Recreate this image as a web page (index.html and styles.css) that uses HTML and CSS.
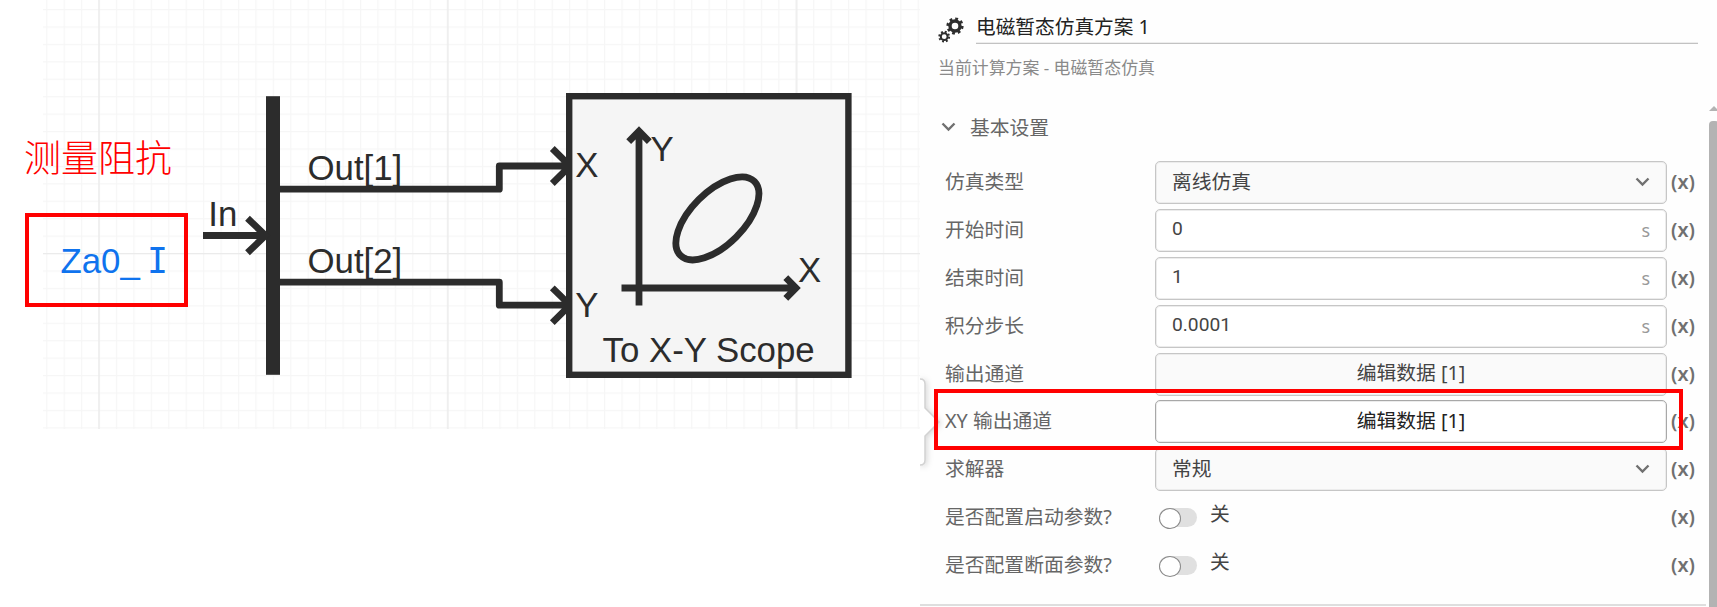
FILE: index.html
```
<!DOCTYPE html>
<html lang="zh">
<head>
<meta charset="utf-8">
<title>电磁暂态仿真方案 1</title>
<link rel="stylesheet" href="styles.css">
</head>
<body>
<main class="app">
  <svg class="canvas" viewBox="0 0 920 607" width="920" height="607">
    <defs>
      <pattern id="minor" x="98.5" y="253" width="17.43" height="17.43" patternUnits="userSpaceOnUse"><path d="M0 .5H17.43M.5 0V17.43" class="grid-minor"/></pattern>
      <pattern id="major" x="98" y="253" width="348.8" height="348.8" patternUnits="userSpaceOnUse"><path d="M0 .5H348.8M1 0V348.8" class="grid-major"/></pattern>
    </defs>
    <rect x="43" y="0" width="877" height="429" fill="url(#minor)"/>
    <rect x="43" y="0" width="877" height="429" fill="url(#major)"/>
    <rect x="266" y="96.2" width="14" height="278.6" class="ink"/>
    <g class="wire">
      <path d="M203 235.5H266M247.5 218.2L265.5 235.5L247.5 252.8"/>
      <path d="M280 189.2H499.3V166H568M552.3 148.5L570 166L552.3 183.5" stroke-linejoin="round"/>
      <path d="M280 282.2H499.3V305.2H568M552.3 287.8L570 305.2L552.3 322.6" stroke-linejoin="round"/>
      <rect x="569.2" y="96.2" width="279.2" height="278.6" class="block"/>
      <path d="M639 305.5V131M628.7 141.6L639 131.2L649.3 141.6"/>
      <path d="M621.5 288H796M785.8 277.7L796 288L785.8 298.3"/>
      <ellipse cx="717.4" cy="218.4" rx="52.3" ry="26.5" transform="rotate(-45 717.4 218.4)"/>
    </g>
    <g class="port">
      <text x="208.3" y="226.2">In</text>
      <text x="307.5" y="179.5">Out[1]</text>
      <text x="307.5" y="272.5">Out[2]</text>
      <text x="575.3" y="177.4">X</text>
      <text x="575.3" y="316.7">Y</text>
      <text x="650.5" y="160.6">Y</text>
      <text x="798" y="282.4">X</text>
      <text x="602.5" y="362">To X-Y Scope</text>
    </g>
    <text x="24" y="171.8" class="note">测量阻抗</text>
    <text x="60.5" y="273.3" class="pin">Za0_<tspan x="147" class="pin-mono">I</tspan></text>
    <rect x="27" y="215" width="159" height="90" class="mark"/>
  </svg>

  <section class="panel">
    <svg class="handle" width="24" height="100" viewBox="0 0 24 100">
      <path d="M0 7Q5 7 5 12V36L19 50L5 64V88Q5 93 0 93"/>
    </svg>
    <header class="head">
      <svg class="gears" width="26" height="26" viewBox="0 0 26 26">
        <circle cx="17" cy="9" r="5" class="ring"/>
        <circle cx="17" cy="9" r="7.3" class="teeth"/>
        <circle cx="6.2" cy="19.7" r="3.4" class="ring-s"/>
        <circle cx="6.2" cy="19.7" r="4.9" class="teeth-s"/>
      </svg>
      <h1 class="title">电磁暂态仿真方案 1</h1>
    </header>
    <p class="subtitle">当前计算方案 - 电磁暂态仿真</p>
    <h2 class="group"><svg class="chev" width="15" height="10" viewBox="0 0 15 10"><path d="M1.5 1.5L7.5 7.5L13.5 1.5"/></svg>基本设置</h2>

    <div class="rows">
      <div class="row"><label>仿真类型</label><div class="field select">离线仿真<svg class="chev" width="15" height="10" viewBox="0 0 15 10"><path d="M1.5 1.5L7.5 7.5L13.5 1.5"/></svg></div><b class="fx">(x)</b></div>
      <div class="row"><label>开始时间</label><div class="field"><span class="num">0</span><span class="unit">s</span></div><b class="fx">(x)</b></div>
      <div class="row"><label>结束时间</label><div class="field"><span class="num">1</span><span class="unit">s</span></div><b class="fx">(x)</b></div>
      <div class="row"><label>积分步长</label><div class="field"><span class="num">0.0001</span><span class="unit">s</span></div><b class="fx">(x)</b></div>
      <div class="row"><label>输出通道</label><div class="field button">编辑数据 [1]</div><b class="fx">(x)</b></div>
      <div class="row"><label>XY 输出通道</label><div class="field button active">编辑数据 [1]</div><b class="fx">(x)</b></div>
      <div class="row"><label>求解器</label><div class="field select">常规<svg class="chev" width="15" height="10" viewBox="0 0 15 10"><path d="M1.5 1.5L7.5 7.5L13.5 1.5"/></svg></div><b class="fx">(x)</b></div>
      <div class="row"><label>是否配置启动参数?</label><div class="switch"><i class="track"></i><span class="off">关</span></div><b class="fx">(x)</b></div>
      <div class="row"><label>是否配置断面参数?</label><div class="switch"><i class="track"></i><span class="off">关</span></div><b class="fx">(x)</b></div>
    </div>
    <div class="rule"></div>
    <div class="highlight"></div>
    <svg class="scroll-up" width="8" height="5" viewBox="0 0 8 5"><path d="M0 5L5 0L8 3V5Z"/></svg>
    <div class="scroll"></div>
  </section>
</main>
</body>
</html>
```
FILE: styles.css
```
* { box-sizing: border-box; }
body {
  margin: 0;
  background: #fff;
  font-family: "Noto Sans", "Noto Sans CJK SC", sans-serif;
  font-size: 19.8px;
  color: #444;
}
.app { display: flex; width: 1717px; height: 607px; overflow: hidden; }
.canvas { flex: none; display: block; }
.grid-minor { stroke: #f6f6f6; stroke-width: 1.5; fill: none; }
.grid-major { stroke: #ebebeb; stroke-width: 1.4; fill: none; }
.ink { fill: #2c2c2c; }
.wire { fill: none; stroke: #2c2c2c; stroke-width: 6.8; }
.block { fill: #f5f5f5; stroke-width: 6.4; }
.port { font: 34.8px "Liberation Sans", Arial, sans-serif; fill: #2c2c2c; }
.note { font: 300 37px "Noto Sans CJK SC", sans-serif; fill: #f00; }
.pin { font: 34.8px "Liberation Sans", Arial, sans-serif; fill: #0f73ee; }
.pin-mono { font-family: "DejaVu Sans Mono", monospace; }
.mark { fill: none; stroke: #f00; stroke-width: 4; }

.panel { position: relative; flex: none; width: 797px; height: 607px; background: #fefefe; }
.handle { position: absolute; left: 0; top: 372px; }
.handle path { fill: #fff; stroke: #d2d2d2; stroke-width: 1.5; filter: drop-shadow(1px 1px 3px rgba(0, 0, 0, .18)); }
.head { display: flex; height: 44px; padding: 0 19px 0 18px; }
.gears { flex: none; margin: 17px 12px 0 0; }
.gears circle { fill: none; stroke: #2e2e2e; }
.gears .ring { stroke-width: 3.4; }
.gears .teeth { stroke-width: 2.6; stroke-dasharray: 2.8 2.93; }
.gears .ring-s { stroke-width: 2; }
.gears .teeth-s { stroke-width: 2; stroke-dasharray: 1.9 1.95; }
.title { flex: 1; margin: 0; padding-top: 9px; border-bottom: 1px solid #c2c2c2; box-shadow: 0 -1px #ededed inset; font-size: 19.7px; font-weight: 400; line-height: 36px; color: #222; }
.subtitle { margin: 13px 0 0 18px; height: 22px; line-height: 22px; font-size: 16.9px; color: #8a8a8a; }
.group { display: flex; align-items: center; gap: 14px; margin: 33px 0 0 21px; height: 29px; font-size: 19.8px; font-weight: 400; color: #666; }
.chev { flex: none; fill: none; stroke: #707070; stroke-width: 2.4; }
.rows { padding: 20px 0 0 25px; }
.row { display: grid; grid-template-columns: 210px 512px 1fr; height: 47.9px; align-items: start; }
.row label { line-height: 41px; color: #666; }
.field { display: flex; align-items: center; height: 43px; padding: 0 16px; border: 1px solid #c6c6c6; border-radius: 5px; box-shadow: inset 0 0 0 1px #ececec; background: #fff; color: #444; line-height: 40px; }
.select { justify-content: space-between; background: #fafafa; padding-bottom: 2px; }
.num { flex: 1; padding-bottom: 3px; font-family: Roboto, sans-serif; font-size: 19.2px; line-height: 36px; }
.unit { font-size: 18px; color: #999; }
.button { justify-content: center; background: #fafafa; padding-bottom: 2px; }
.active { background: #fff; border-color: #a8a8a8; color: #222; }
.fx { padding-left: 4px; line-height: 42px; font-size: 19.8px; font-weight: 600; color: #707070; }
.switch { display: flex; align-items: center; height: 43px; padding-left: 4px; gap: 13px; }
.track { width: 38px; height: 19px; border-radius: 10px; background: #e0e0e0; }
.track::before { content: ""; display: block; width: 20px; height: 19px; border: 1.5px solid #8a8a8a; border-radius: 50%; background: #fff; }
.off { margin-top: -7px; line-height: 40px; color: #444; }
.rule { width: 786px; height: 2px; margin-top: 12px; background: #dedede; }
.highlight { position: absolute; left: 14px; top: 389px; width: 749px; height: 61px; border: 4px solid #f00; }
.scroll-up { position: absolute; right: 0; top: 106px; fill: #b3b3b3; }
.scroll { position: absolute; left: 789px; top: 121px; width: 10px; height: 490px; border-radius: 4px; background: #b3b3b3; }
```
